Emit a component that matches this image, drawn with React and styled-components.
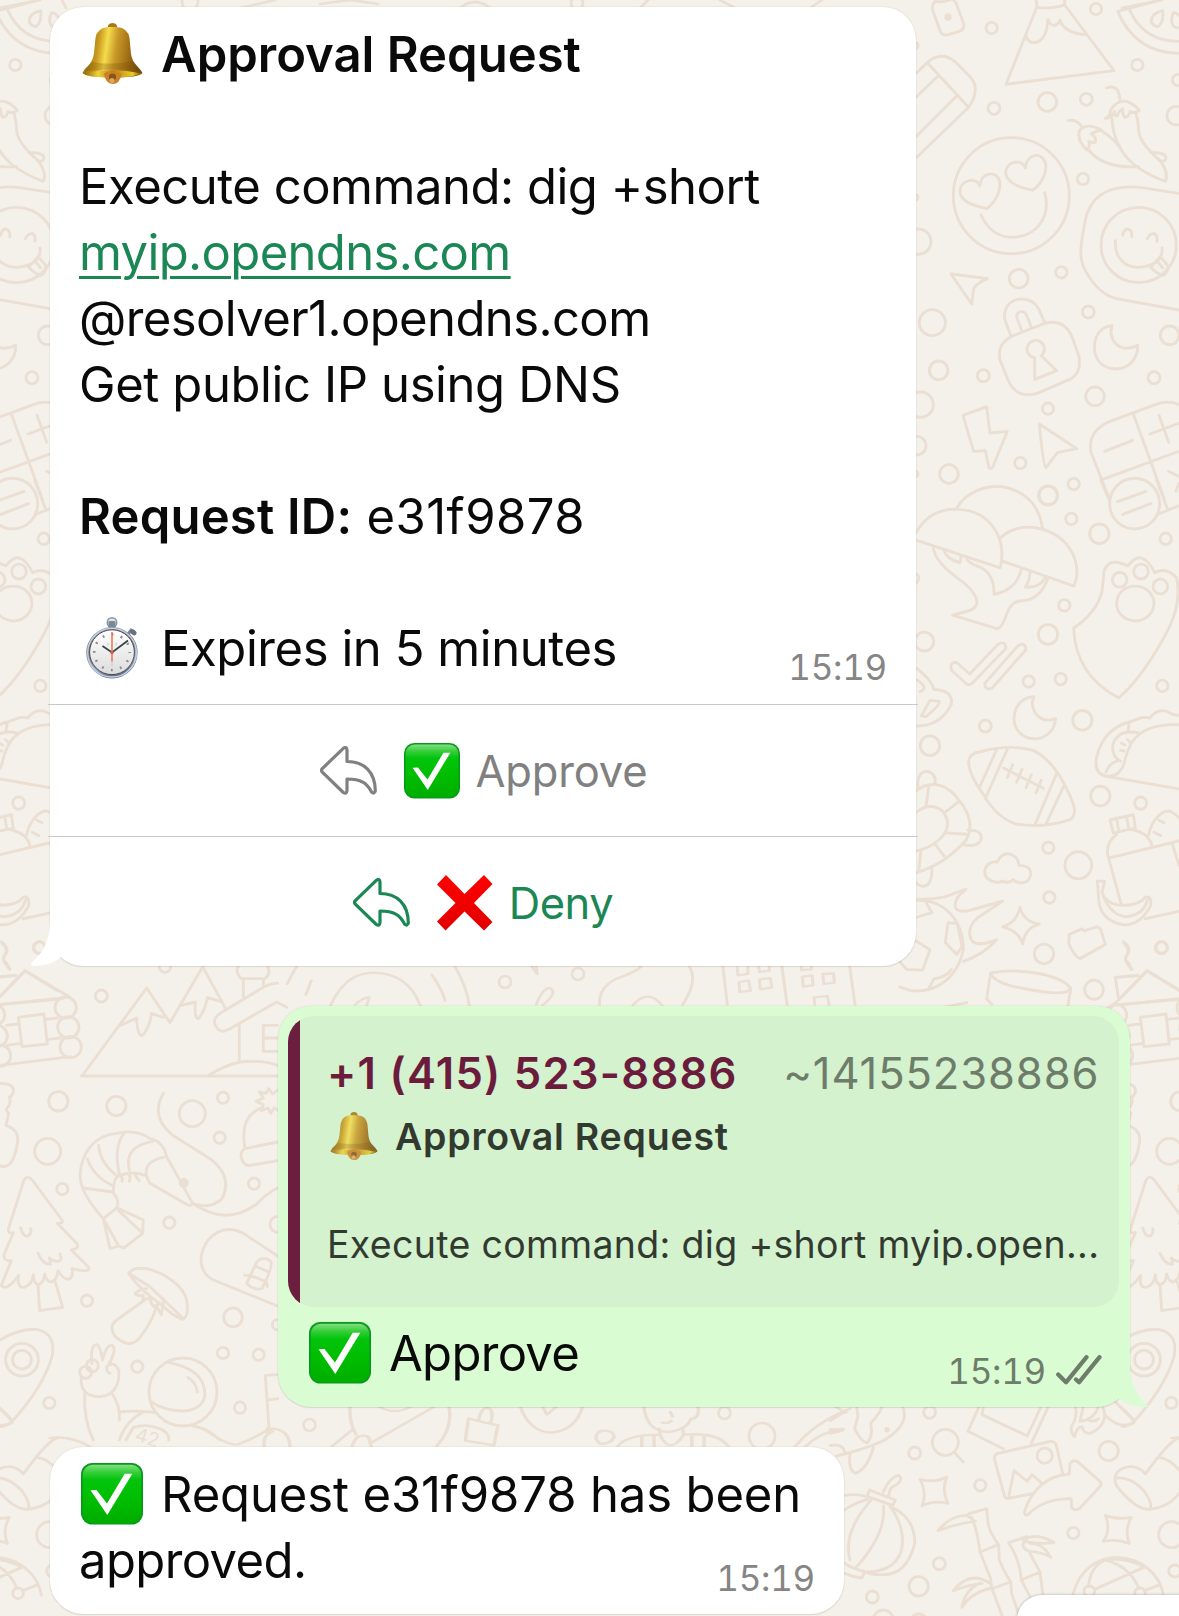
import React from 'react';
import styled, { createGlobalStyle } from 'styled-components';

const GlobalStyle = createGlobalStyle`
  * { box-sizing: border-box; }
  body { margin: 0; background: #f4f1ea; }
`;

const Screen = styled.main`
  position: relative;
  width: 1179px;
  height: 1616px;
  overflow: hidden;
  background: #f4f1ea;
  font-family: Inter, "Liberation Sans", sans-serif;
  color: #0a0a0a;
`;

const Wallpaper = styled.svg`
  position: absolute;
  inset: 0;
  width: 1179px;
  height: 1616px;
`;

const Thread = styled.div`
  position: relative;
  display: flex;
  flex-direction: column;
  align-items: flex-start;
  padding-top: 7px;
`;

const Bubble = styled.section`
  position: relative;
  width: ${(p) => p.$w}px;
  height: ${(p) => p.$h}px;
  flex: none;
  margin-top: ${(p) => p.$mt || 0}px;
  margin-left: ${(p) => p.$ml}px;
  padding: ${(p) => p.$pad};
  border-radius: 33px;
  background: ${(p) => (p.$own ? '#dafcd3' : '#ffffff')};
  box-shadow: 0 0 2px rgba(60, 40, 20, 0.14), 0 1px 1px rgba(60, 40, 20, 0.1);
`;

const Tail = styled.svg`
  position: absolute;
  bottom: -1px;
  ${(p) => (p.$own ? 'right: -19px;' : 'left: -20px;')}
  width: 40px;
  height: 44px;
  fill: ${(p) => (p.$own ? '#dafcd3' : '#ffffff')};
  overflow: visible;
`;

const Body = styled.div`
  padding: 0 29px 0 29px;
`;

const Line = styled.div`
  display: flex;
  height: 66px;
  font-size: 49px;
  line-height: 66px;
  white-space: pre;
`;

const Words = styled.span`
  font-weight: ${(p) => (p.$bold ? 600 : 400)};
  letter-spacing: ${(p) => p.$ls || 0}px;
`;

const Link = styled.a`
  color: #1b8755;
  text-decoration: underline;
  text-decoration-thickness: 3px;
  text-underline-offset: 6px;
`;

const Slot = styled.span`
  display: flex;
  flex: none;
  width: ${(p) => p.$w}px;
  padding-left: ${(p) => p.$x || 0}px;
  padding-top: ${(p) => p.$y || 0}px;
`;

const Split = styled.div`
  display: flex;
  justify-content: space-between;
  align-items: flex-start;
  height: ${(p) => p.$h || 66}px;
`;

const Stamp = styled.time`
  display: flex;
  gap: 10px;
  margin-top: ${(p) => p.$mt}px;
  height: 42px;
  line-height: 42px;
  font-size: 35px;
  font-variant-numeric: tabular-nums;
  letter-spacing: -0.3px;
  color: ${(p) => (p.$own ? '#6d7d6a' : '#858585')};
`;

const Action = styled.button`
  display: flex;
  justify-content: center;
  align-items: center;
  width: 870px;
  height: 132px;
  margin: 0 0 0 -2px;
  padding: 0 0 0 ${(p) => p.$shift || 0}px;
  border: 0;
  border-top: 1px solid #c9c9c9;
  background: none;
  font: 400 43.5px/60px Inter, "Liberation Sans", sans-serif;
  letter-spacing: ${(p) => p.$ls || 0}px;
  color: ${(p) => p.$color};
`;

const ActionIcon = styled.span`
  display: flex;
  margin-right: ${(p) => p.$gap}px;
`;

const Quote = styled.blockquote`
  display: flex;
  height: 291px;
  margin: 0;
  border-radius: 26px;
  overflow: hidden;
  background: #d5f2cf;
`;

const QuoteBar = styled.div`
  width: 12px;
  flex: none;
  background: #6b1e3e;
`;

const QuoteBody = styled.div`
  flex: 1;
  padding: 29px 20px 0 27px;
  color: #323a30;
`;

const QuoteHead = styled.div`
  display: flex;
  justify-content: space-between;
  height: 65px;
  line-height: 57px;
  font-size: 43.5px;
  white-space: pre;
`;

const Sender = styled.span`
  font-weight: 600;
  color: #6b1c3c;
  letter-spacing: 1.27px;
`;

const Handle = styled.span`
  color: #6d7d6a;
  letter-spacing: 0.9px;
`;

const QuoteLine = styled.div`
  display: flex;
  height: 54px;
  line-height: 54px;
  font-size: 37.5px;
  font-weight: ${(p) => (p.$bold ? 600 : 400)};
  letter-spacing: ${(p) => p.$ls || 0}px;
  white-space: pre;
`;

const OwnFoot = styled.div`
  display: flex;
  justify-content: space-between;
  align-items: flex-start;
  padding: 14px 17px 0 21px;
`;

const Corner = styled.div`
  position: absolute;
  left: 1017px;
  top: 1595px;
  width: 240px;
  height: 80px;
  border-radius: 25px;
  background: #fff;
  box-shadow: 0 0 3px rgba(0, 0, 0, 0.3);
`;

const Bell = ({ size, id, faded }) => (
  <svg width={size} height={size} viewBox="0 0 61 61" opacity={faded ? 0.85 : 1}>
    <defs>
      <linearGradient id={id} x1="0" x2="1" y1="0" y2="0.12">
        <stop offset="0.05" stopColor="#8a5c0c" />
        <stop offset="0.3" stopColor="#c99a1c" />
        <stop offset="0.44" stopColor="#f5dc4e" />
        <stop offset="0.6" stopColor="#c99a28" />
        <stop offset="0.82" stopColor="#a06c14" />
        <stop offset="1" stopColor="#77500c" />
      </linearGradient>
      <linearGradient id={`${id}m`} x1="0" x2="1">
        <stop offset="0" stopColor="#8a6008" />
        <stop offset="0.25" stopColor="#f0d23c" />
        <stop offset="0.5" stopColor="#c47a1c" />
        <stop offset="0.85" stopColor="#e6cf22" />
        <stop offset="1" stopColor="#7a5208" />
      </linearGradient>
    </defs>
    <path d="M26 6 Q25 0 30.500 0 Q36 0 35 6Z" fill="#a87814" />
    <path d="M.5 50 Q2 46 6 43 Q11 38 12 30 L13.500 15 Q15 5 26 4 L35 4 Q46 5 47.500 15 L49 31 Q50 38 55 43 Q59 47 60.500 50 Q57 54.500 30.500 54.500 Q4 54.500 .5 50Z" fill={`url(#${id})`} />
    <path d="M10 39 Q30 43 51 38 Q57 45 58 48 Q30 45 3 48 Q6 42 10 39Z" fill="#6f4808" opacity=".25" />
    <path d="M1.500 50.500 Q30 44 59.500 50.500 Q48 55 30.500 54.500 Q10 54.500 1.500 50.500Z" fill={`url(#${id}m)`} />
    <path d="M22 51 Q23 48.500 30 48.500 Q38 48.500 39.500 51 Q38 61 30.500 61 Q23.500 60.500 22 51Z" fill="#c98224" />
    <circle cx="30.500" cy="54" r="3.600" fill="#8a5418" />
    <circle cx="30" cy="57.500" r="2.500" fill="#d9a766" />
  </svg>
);

const Stopwatch = () => (
  <svg width="54" height="62" viewBox="0 0 54 62">
    <defs>
      <linearGradient id="rim" x1="0" y1="0" x2="0.3" y2="1">
        <stop offset="0" stopColor="#a3b6cc" />
        <stop offset="0.45" stopColor="#6b6e75" />
        <stop offset="0.8" stopColor="#93a9c5" />
        <stop offset="1" stopColor="#66758c" />
      </linearGradient>
      <linearGradient id="dial" x1="0" y1="0" x2="0" y2="1">
        <stop offset="0" stopColor="#fff" />
        <stop offset="1" stopColor="#dcdcde" />
      </linearGradient>
    </defs>
    <circle cx="26" cy="5.500" r="4.700" fill="#dfe4ea" stroke="#8b96a4" strokeWidth="1.600" />
    <rect x="22.500" y="4" width="7" height="7" rx="1.500" fill="#7b8794" />
    <path d="M42 17 L46 12" stroke="#7b8694" strokeWidth="3" />
    <ellipse cx="47.500" cy="15" rx="3.400" ry="2.500" fill="#65717f" transform="rotate(40 47 15)" />
    <circle cx="26" cy="35.700" r="25.700" fill="url(#rim)" />
    <circle cx="26" cy="35.700" r="24.300" fill="none" stroke="#c3d2e5" strokeWidth="1.400" />
    <circle cx="26" cy="35.200" r="22.400" fill="url(#dial)" stroke="#55474b" strokeWidth="1" />
    <circle cx="26" cy="35.200" r="17.800" fill="none" stroke="#8a8a8a" strokeWidth="2.600" strokeDasharray="1.800 7.520" strokeDashoffset=".9" />
    <path d="M26 43 v6 M22 25.500 v3 M30 25.500 v3" stroke="#c8c8c8" strokeWidth="1" />
    <path d="M16.500 29 L26 35.500 L42 23.500" fill="none" stroke="#34454a" strokeWidth="1.800" />
    <path d="M26 15 V44.500" stroke="#ee7a58" strokeWidth="1.600" />
    <circle cx="26" cy="35.500" r="1.700" fill="#d8603e" />
  </svg>
);

const CheckBox = ({ size, id }) => (
  <svg width={size} height={size} viewBox="0 0 62 62">
    <defs>
      <linearGradient id={id} x1="0" y1="0" x2="0" y2="1">
        <stop offset="0" stopColor="#84dd84" />
        <stop offset="0.13" stopColor="#35ce38" />
        <stop offset="0.26" stopColor="#02c40c" />
        <stop offset="0.6" stopColor="#00bd00" />
        <stop offset="1" stopColor="#00ad00" />
      </linearGradient>
    </defs>
    <rect width="62" height="61.500" rx="11.500" fill="#07991a" />
    <rect x="1.700" y="1.700" width="58.600" height="58.500" rx="10" fill={`url(#${id})`} />
    <path d="M9.500 27.300 L15.500 27 L26 40.500 L43.700 10.700 L51.300 10.700 L26.300 52Z" fill="#fff" />
  </svg>
);

const Cross = () => (
  <svg width="56" height="56" viewBox="0 0 56 56">
    <defs>
      <linearGradient id="cross" x1="0" y1="0" x2="0" y2="1">
        <stop offset="0" stopColor="#ff0000" />
        <stop offset="1" stopColor="#e20000" />
      </linearGradient>
    </defs>
    <path d="M0 9.500 L9 0 L27.500 19 L47 0 L55.500 9 L37 28 L55.500 47 L47 55.500 L27.500 36.500 L8.500 55.500 L0 46.500 L18.500 28Z" fill="url(#cross)" />
  </svg>
);

const Reply = () => (
  <svg width="57" height="49" viewBox="0 0 57 49" fill="none" stroke="currentColor" strokeWidth="3.200" strokeLinejoin="round">
    <path d="M2.300 22.600 L23.300 2.300 Q26.800 .2 27 4 V15.500 C44 15.500 55.300 26 55.300 45 Q54.500 48.500 51.500 46 C47 37 41 33 27 33 V44.500 Q26.500 48.500 23.300 46.500 L2.300 26.200 Q.8 24.400 2.300 22.600Z" />
  </svg>
);

const Ticks = () => (
  <svg width="46" height="30" viewBox="0 0 46 30" fill="none" stroke="currentColor" strokeWidth="4.200" strokeLinecap="round" strokeLinejoin="round">
    <path d="M2.200 19.500 L10 27.300 L30.500 2.200 M20 24.500 L23 27.300 L43.500 2.200" />
  </svg>
);

const doodles = [
  {
    at: 'translate(900 0) scale(.33333)',
    circles: [[275, 84, 17], [588, 27, 17], [712, 195, 17], [442, 306, 28], [559, 298, 18], [282, 325, 18], [334, 587, 174], [549, 537, 17], [55, 725, 38], [356, 836, 28], [484, 817, 17], [97, 968, 39], [565, 936, 18], [116, 1111, 28], [250, 1127, 18], [762, 1133, 18], [585, 1189, 28], [809, 1006, 28], [62, 1214, 38], [444, 1226, 17], [50, 1337, 28], [361, 1389, 17], [147, 1422, 28], [521, 1452, 17], [445, 1486, 28], [716, 735, 113], [829, 347, 28], [834, 240, 17], [46, 137, 8], [46, 592, 8], [46, 1422, 8]],
    dots: [[144, 51, 11]],
    paths: [
      'M106 0 L100 12 Q94 20 100 36 L120 92 Q126 108 144 104 L178 94 Q196 88 190 68 L168 8 L160 0 M104 4 Q128 8 150 0',
      'M410 22 L318 253 L642 212 L494 15 M408 0 L412 22 Q460 28 494 14 L494 0 M378 108 Q384 128 402 128 Q430 126 440 88 L444 58 Q450 76 462 76 Q476 74 480 60 Q492 100 560 104',
      'M780 0 L653 34 Q706 158 837 160 M688 28 Q730 124 837 124 M788 32 Q752 40 754 66 Q760 78 774 80 Q792 66 788 32Z M820 38 Q806 74 830 84 Q850 80 846 62 Q836 38 820 38',
      'M48 220 L82 188 Q122 152 164 184 L210 230 Q244 266 206 322 L48 474 M82 188 L206 322 M114 228 L48 292 M170 288 L48 410',
      'M261 626 C206 616 180 596 180 574 C180 538 232 530 240 558 C242 524 272 514 290 528 C312 552 294 600 261 626Z',
      'M399 570 C344 562 317 540 317 516 C320 482 368 476 376 504 C380 468 410 458 428 474 C450 500 430 548 399 570Z',
      'M243 645 C266 694 300 712 338 712 C410 710 454 650 434 578',
      'M620 264 Q656 250 660 300 M616 355 Q630 352 632 330 Q650 300 680 304 Q704 312 718 332 Q700 342 690 334 Q688 350 674 352 Q666 340 668 326 Q654 334 652 348 Q640 348 644 334 Q634 356 616 355 M636 356 Q640 440 700 492 Q740 524 796 544 Q808 520 780 482 Q716 426 716 390 Q714 360 708 340 M752 458 Q800 456 798 476 Q790 490 776 480',
      'M505 362 Q530 356 546 382 M560 450 Q530 420 538 392 Q560 366 604 390 Q580 396 574 402 Q590 412 586 426 Q570 428 566 424 Q572 440 560 450 M604 392 Q640 416 660 442 M566 450 Q610 506 716 500',
      'M837 580 L720 562 Q580 550 556 660 C540 740 536 778 556 812 Q596 884 650 896 L837 930 M668 706 Q672 686 684 687 Q698 692 695 710 M742 716 Q750 700 762 700 Q774 706 771 724 M646 722 C644 780 680 802 714 802 C760 800 790 780 786 744 M752 802 L780 770 L802 794 Q808 812 790 826 Q776 826 752 802 M772 784 L788 804',
      'M153 822 L262 836 Q230 850 221 866 L215 912Z',
      'M332 1006 L314 958 Q310 910 352 898 Q396 892 416 926 L434 968 M366 994 L350 952 Q350 936 364 934 Q376 936 380 946 L394 982 M332 1010 L434 970 Q490 956 514 1006 L536 1066 Q548 1124 500 1142 L412 1180 Q350 1198 324 1140 L300 1080 Q290 1034 332 1010Z M404 1073 L404 1138 L470 1112 L424 1067 A26 26 0 1 0 404 1073',
      'M636 977 C600 980 583 1010 583 1044 C584 1086 616 1107 648 1107 C684 1106 714 1080 713 1036 Q670 1056 646 1030 Q626 1004 636 977Z',
      'M189 1246 L260 1220 L270 1299 L322 1294 L278 1402 Q270 1410 266 1400 L256 1352 L221 1354Z',
      'M418 1272 L530 1346 L472 1358 L438 1403 Q430 1400 418 1272Z',
      'M837 1214 Q800 1198 760 1216 L620 1268 Q560 1300 574 1360 L628 1496 M700 1242 L794 1500 M608 1438 L837 1354 M614 1354 L698 1321 M750 1302 L837 1270 M777 1246 L806 1327 M806 1414 L837 1430 M837 1450 L828 1474',
    ],
  },
  {
    at: 'translate(900 480) scale(.33333 .33801)',
    circles: [[444, 46, 28], [514, 115, 17], [598, 159, 29], [797, 174, 17], [704, 70, 75], [493, 371, 17], [444, 457, 29], [73, 478, 28], [386, 596, 17], [482, 589, 17], [787, 609, 17], [256, 728, 18], [547, 711, 29], [90, 786, 29], [601, 935, 29], [722, 956, 18], [445, 1088, 17], [535, 1140, 40], [448, 1235, 17], [432, 1402, 29], [785, 1383, 17], [582, 1508, 28], [659, 295, 22], [723, 271, 22], [781, 315, 22], [40, 291, 16]],
    paths: [
      'M170 84 C200 30 270 14 310 20 C390 36 420 90 427 140 M48 156 C80 100 130 84 176 87 C270 92 322 170 301 260 L48 178 M300 172 C340 138 380 136 410 142 C510 160 550 250 522 314 L308 240',
      'M100 200 Q104 240 170 288 C230 330 250 370 210 386 L158 400 L290 440 Q306 440 320 396 Q334 360 360 358 Q420 358 444 290 M130 204 Q140 236 180 244 L184 224 M200 232 Q204 246 236 256 Q284 276 282 338 Q350 326 364 264 M390 274 Q388 300 376 317 Q420 320 436 288',
      'M653 64 L738 34 M668 102 L752 70 M602 0 L628 60 M770 0 L804 90 M772 102 L837 76',
      'M612 270 Q626 226 684 254 Q726 198 764 274 Q800 256 830 290 C844 360 820 420 784 480 Q720 590 656 645 C570 600 524 530 521 438 Q590 392 606 330 Q610 300 612 270Z M650 366 C650 330 680 314 706 314 C740 314 762 340 762 366 C760 400 730 417 706 417 C670 414 650 392 650 366Z',
      'M154 562 Q148 538 170 540 L209 574 L294 486 Q316 474 318 498 L216 602 Q206 610 198 602Z M254 602 L354 490 Q376 478 378 502 L276 616 Q256 624 254 602Z',
      'M48 556 Q94 590 102 620 Q160 622 154 664 Q120 730 48 728 M64 698 L90 652 L118 655 Q122 664 78 700Z M48 590 Q90 614 60 626',
      'M402 641 C366 642 342 670 342 708 C344 744 372 766 406 766 C440 764 464 740 467 706 Q430 720 406 690 Q390 664 402 641Z',
      'M206 834 Q208 808 240 804 Q330 780 400 800 Q460 830 500 914 C530 970 530 996 506 1006 Q430 1030 350 1018 Q290 1000 250 930 Q206 870 206 834Z M290 798 L238 910 M322 796 L256 942 M470 868 L405 1020 M490 908 L438 1018 M311 852 L430 912 M338 842 L322 880 M366 856 L350 894 M394 872 L378 910 M424 888 L408 926',
      'M837 696 Q820 696 800 684 Q770 676 750 704 Q730 700 716 706 L688 716 Q610 736 590 820 Q580 868 620 877 L837 914 M837 724 Q740 720 700 770 Q680 800 672 840 Q656 880 620 876 M688 716 L684 744 M716 748 Q650 736 638 786 Q636 820 662 832 M618 864 Q630 836 650 832 M664 778 l10 6 M682 768 l8 8 M662 800 l10 2',
      'M48 920 C100 880 150 910 176 946 Q230 1010 198 1066 Q130 1140 48 1162 M54 912 Q50 860 84 862 Q112 872 104 902 M48 984 Q90 950 128 980 Q160 1020 122 1060 Q90 1090 48 1098 M86 908 L78 966 M178 950 L134 984 M138 1044 L198 1048 M104 1076 L132 1112 M62 1102 L56 1160 M204 1036 Q244 1034 244 1060 Q236 1090 186 1078 M96 1150 Q96 1200 70 1202 Q52 1200 48 1190',
      'M290 1190 Q252 1184 254 1156 Q262 1126 292 1130 Q304 1104 326 1106 Q356 1112 356 1140 Q394 1140 392 1168 Q386 1194 360 1192 Q346 1190 340 1182 Q326 1196 306 1186 Q296 1192 290 1190Z',
      'M630 1006 L700 990 L706 1030 L640 1044Z M650 1000 L656 1040 M680 996 L686 1030 M650 1048 Q616 1074 624 1112 L664 1256 M696 1034 Q750 1046 756 1084 M628 1118 L837 1068 M746 1050 C756 1000 790 976 810 980 Q830 990 837 1000 M776 1006 L792 1014 M762 1042 L782 1052 M816 1074 L837 1140 M735 1298 L837 1276',
      'M592 1186 L614 1188 L606 1220 Q620 1260 676 1258 Q720 1256 736 1234 Q756 1230 752 1260 Q720 1318 670 1316 Q600 1304 596 1240Z M606 1220 Q630 1290 680 1292 Q730 1286 742 1244',
      'M48 1240 Q130 1240 160 1224 L198 1210 Q160 1240 166 1264 Q176 1284 220 1270 L308 1246 L232 1296 Q196 1330 216 1364 Q236 1382 290 1360 Q250 1404 190 1424 M48 1244 C130 1240 190 1300 190 1390 C170 1480 100 1520 30 1510 L0 1500 M76 1246 L96 1280 L48 1294 M144 1310 L172 1312 L186 1380 L170 1404 L136 1368Z M48 1364 L90 1390 L68 1450 L20 1448 L0 1426 M84 1508 L102 1476 Q140 1470 154 1448',
      'M360 1264 Q370 1306 418 1314 Q376 1324 368 1372 Q356 1334 308 1322 Q350 1310 360 1264Z',
      'M508 1344 L546 1328 L552 1334 L590 1322 Q598 1322 602 1330 L616 1374 L540 1416 Q526 1414 506 1372Z',
      'M272 1458 C380 1440 490 1470 512 1504 Q500 1530 380 1506 Q280 1490 272 1458 L260 1535 L275 1550 M512 1504 L502 1568',
      'M670 1366 Q694 1384 684 1400 Q670 1416 682 1430 L694 1448 M634 1560 L740 1452 L837 1510 M656 1538 L646 1472 L714 1466 M640 1554 L837 1536 M100 1566 L200 1546',
    ],
  },
  {
    at: 'translate(0 940) scale(.33333)',
    circles: [[197, 203, 32], [205, 262, 32], [212, 321, 32], [-18, 225, 32], [-10, 288, 32], [0, 347, 32], [118, 23, 18], [304, 168, 18], [495, 80, 17], [175, 484, 29], [349, 498, 29], [577, 521, 39], [669, 473, 17], [659, 593, 17], [143, 634, 39], [187, 747, 17], [762, 731, 17], [508, 848, 17], [261, 1082, 17], [699, 1132, 28], [669, 1239, 17], [776, 1244, 17], [412, 1280, 17], [148, 1389, 17], [720, 1403, 17], [834, 853, 24], [832, 1154, 15], [66, 1259, 28], [66, 1259, 49], [549, 1356, 102], [277, 1277, 18], [257, 1297, 18]],
    dots: [[551, 729, 15]],
    paths: [
      'M0 110 L46 106 M0 170 L76 92 L210 172 M0 194 L190 174 M55 232 L132 222 L142 312 L66 320Z M20 256 L55 252 M138 238 L172 234 M22 316 L62 310 M146 298 L180 294 M0 376 L212 350',
      'M6 10 Q24 28 16 44 Q4 60 20 70 L30 88',
      'M246 408 L440 144 L510 248 L608 80 L678 208 M244 408 L833 408 M362 256 L410 234 Q412 290 428 286 Q450 260 454 220 L490 232 M544 196 L586 186 Q582 236 596 236 Q616 210 622 172 L660 184',
      'M730 118 L730 170 M790 118 L790 136 M724 116 Q700 90 720 74 L800 74 Q816 100 794 116Z M833 130 Q810 130 790 142 L660 220 Q630 240 654 268 Q670 280 690 266 L830 186 L860 202 M718 252 L718 360 M833 256 L790 256 L790 334 L833 334 M790 294 L833 294 M626 406 Q700 360 760 364 Q800 364 833 376',
      'M0 430 Q44 430 40 456 Q34 474 28 470 Q34 490 24 500 Q14 510 26 520 L18 556 Q60 570 52 610 Q40 690 0 678',
      'M833 510 L822 504 L812 520 L804 504 L784 512 L790 494 L768 484 L790 474 L778 456 L798 460 L806 446 L818 462 L833 450 M734 620 Q720 530 780 506 M833 606 L734 626 Q720 634 724 654 Q732 680 752 676 L833 662',
      'M490 460 Q450 530 516 584 L630 656 Q700 710 666 776 Q630 810 578 790 Q680 860 770 792 Q800 760 833 744',
      'M310 836 C250 770 240 730 240 706 C244 640 280 586 350 580 Q410 566 450 596 Q490 604 500 650 L578 790 Q572 800 562 794 L450 730 Q430 700 444 676 Q460 656 500 650 M310 836 L350 804 Q360 780 340 760 Q340 720 352 710 Q390 690 436 706 M250 744 L338 756 M262 656 Q280 710 340 738 M296 616 Q300 670 352 708 M372 580 Q340 620 358 700 M458 604 Q370 620 388 690 M310 836 L330 926 L356 918 L312 840 M356 806 L430 840 L428 880 L372 924 L356 918 M356 812 L424 876 M356 704 Q370 710 366 724 M384 700 Q394 708 388 724 M404 700 Q410 716 418 722',
      'M72 720 Q84 702 98 722 L186 840 Q192 850 172 850 L232 912 Q238 926 214 930 L266 982 Q272 1000 216 986 Q222 1006 208 1018 Q190 1020 174 992 Q172 1020 154 1026 Q140 1026 134 1002 Q132 1030 114 1034 Q100 1030 100 1004 Q96 1036 72 1042 Q50 1044 56 1006 Q20 1056 4 1036 L34 962 Q10 964 12 944 L40 878 Q22 884 26 864Z M114 1034 L119 1112 L188 1102 L166 1026 M62 864 Q70 892 84 888 Q96 880 92 866 M114 940 Q130 976 152 972 L148 954 Q170 972 184 958 L180 942',
      'M386 1000 Q400 980 440 986 C500 1000 550 1040 560 1080 Q568 1130 548 1138 Q520 1130 486 1096 Q420 1050 386 1000Z M386 1000 L450 1040 L548 1134 M434 1080 L350 1140 Q324 1160 346 1190 Q390 1230 420 1192 Q460 1140 470 1096 M440 1046 Q410 1050 406 1062 Q420 1070 430 1066 L428 1076 Q440 1080 452 1072 Q450 1090 462 1100 Q476 1090 470 1100 L484 1124 Q490 1100 490 1076',
      'M833 948 L730 880 Q670 850 624 900 C590 950 600 1000 640 1020 L833 1098 M740 1030 L770 966 Q790 946 812 964 Q820 980 786 1046 Q760 1052 740 1030 M766 978 L802 994 M752 1006 L790 1022 M734 1006 L754 1006 M798 1020 L802 1040',
      'M0 1200 Q60 1164 110 1168 Q170 1180 156 1250 Q130 1340 40 1440 Q20 1460 0 1460 M0 1404 L36 1440',
      'M276 1270 Q270 1216 290 1214 Q300 1216 308 1260 Q320 1210 338 1216 Q350 1230 328 1270 M244 1312 C240 1350 260 1370 300 1370 C350 1366 360 1320 356 1290 Q340 1260 320 1280 Q318 1296 330 1300 M254 1356 Q250 1440 280 1500 M336 1360 Q362 1400 358 1440',
      'M508 1268 Q620 1290 614 1370 C600 1430 500 1420 452 1384 M564 1312 Q590 1330 592 1356 M360 1416 Q400 1410 468 1418 M430 1416 Q380 1440 358 1500 M378 1500 L400 1462 Q440 1450 480 1466 Q510 1480 506 1500 M580 1458 Q620 1464 660 1500 M833 1304 L796 1306 L808 1480 M804 1380 L833 1376',
    ],
  },
  {
    at: 'translate(830 1380) scale(.33333)',
    circles: [[299, 97, 18], [254, 219, 18], [346, 187, 39], [451, 316, 17], [328, 551, 18], [266, 619, 29], [127, 651, 18], [160, 720, 30], [730, 459, 17], [836, 213, 29], [1025, 464, 39], [1034, 573, 18], [644, 227, 23], [778, 634, 16], [930, 640, 16], [266, 728, 26]],
    dots: [[171, 149, 8]],
    paths: [
      'M374 218 L400 246 M218 80 Q240 130 170 176 Q130 200 20 228 M0 122 L48 92 M0 148 L40 150 L0 160 M80 80 L84 108 L74 146 Q96 190 112 188 Q130 170 122 130 Q150 100 156 80 M0 196 Q40 190 44 216 M60 220 Q54 270 76 280 Q110 270 130 204',
      'M446 82 L414 154 L520 206 M460 82 L456 104 L592 168 L632 82 M654 82 L604 190 M604 342 L540 354 Q528 358 524 350 L494 240 Q490 226 504 220 L662 184 Q678 184 680 200 L698 280 M536 350 L552 272 L592 304 L606 284 L636 310',
      'M596 402 Q582 412 584 392 Q620 290 718 282 L720 250 Q730 238 742 244 L810 304 Q818 314 808 322 L748 386 Q732 394 724 380 L724 356 Q640 356 596 402Z',
      'M736 80 Q744 112 724 140 Q722 160 734 170 Q740 140 756 140 Q760 160 780 160 Q826 140 824 100 L818 80 M760 80 L750 124 Q790 120 804 84 M770 118 Q790 130 806 116 M828 108 Q870 150 912 128 M856 66 L912 122',
      'M270 298 Q310 310 350 292 Q334 330 354 370 Q310 360 276 378 Q292 340 270 298Z M826 406 Q860 420 904 412 Q882 450 898 490 Q860 476 820 484 Q844 446 826 406Z',
      'M112 350 L118 330 L196 360 L188 376Z M160 336 Q180 290 206 286 Q222 300 196 316 Q180 320 176 346 M44 346 Q80 340 112 350 M180 380 C230 400 256 440 254 490 Q230 590 150 584 Q120 584 100 572 M122 362 C70 420 44 480 60 540 M160 378 Q170 460 80 560 M180 380 C220 430 230 500 200 540 Q170 576 110 576 M44 550 L60 560 L104 576 L96 594 Q70 592 44 580 M44 390 Q70 370 112 358',
      'M416 402 L470 386 L474 430 Q480 460 506 494 L508 540 Q520 570 542 606 L545 640 L565 700 M424 412 Q440 440 450 516 L480 590 L486 626 L516 706 M450 516 L506 494 M486 626 L542 606 M324 452 Q360 406 410 406 L436 424 Q380 430 324 452Z M370 632 Q420 570 480 610 M370 632 Q410 616 456 610 M484 624 Q420 640 396 682 Q404 630 450 610 M590 470 L536 488 Q570 540 574 600 L600 650 M600 520 L630 576 L638 640 M574 600 L630 576 M580 480 Q620 456 672 488 Q630 494 584 484 Q570 500 596 514 Q640 516 662 532 Q640 490 600 490',
      'M1047 174 Q1020 180 946 282 Q920 250 880 264 C846 280 850 310 870 330 Q920 390 960 388 Q1020 380 1047 340 M862 294 Q900 290 940 330 Q970 370 960 388 M986 232 Q1020 236 1047 270',
      'M728 645 C750 560 810 532 864 532 C930 534 990 580 1000 645 M794 628 L946 560 M944 632 L990 614 M776 618 Q780 560 826 540 Q900 560 926 624 M826 540 Q880 530 940 560',
    ],
  },
  {
    at: 'translate(230 960) scale(.44643 .33333)',
    circles: [],
    paths: [
      'M128 72 Q140 40 150 18 M170 104 L182 62 M225 136 C250 66 280 38 324 38 C370 40 406 66 426 136 M452 44 Q476 90 482 122 M504 20 Q530 80 536 136 M280 134 Q298 112 312 112 L306 136 M676 20 L688 42 L686 18 M686 134 Q700 84 716 84 Q736 96 700 136 M922 18 Q910 36 866 56 Q824 84 828 136 M1028 18 Q1050 60 1014 134 M902 136 Q936 84 968 136',
      'M1104 18 L1114 134 M1236 18 L1248 134 M1388 18 L1400 134 M1136 22 l2 24 l22 -4 v-22 M1184 20 l2 16 l22 -4 v-14 M1140 66 L1162 62 L1166 92 L1142 96Z M1186 58 L1210 54 L1214 82 L1188 88Z M1282 50 L1304 46 L1306 76 L1284 80Z M1328 42 L1352 40 L1354 68 L1330 72Z M1310 134 L1308 112 L1338 108 L1342 134 M1280 20 v10 l22 -2 v-10',
    ],
  },
  {
    at: 'translate(50 1402) scale(.5102 .33333)',
    circles: [],
    paths: [
      'M588 15 Q586 60 600 98 M782 15 Q790 80 758 132 M646 15 Q676 40 706 15 M752 15 L630 122 M592 84 L552 134 M592 134 Q600 90 624 104 L630 134 M820 50 L878 70 L870 130 L814 116Z M840 54 Q846 10 862 20 Q870 30 864 62 M922 15 Q940 90 984 92 Q1030 84 1044 15 M966 15 L974 38 L992 15',
      'M1164 15 Q1170 90 1214 90 Q1250 80 1256 50 Q1274 50 1270 15 M1194 80 L1196 100 Q1216 160 1242 98 L1240 80 M1112 134 Q1130 98 1194 98 M1242 98 Q1310 90 1330 134 M1160 104 V134 M1184 100 V134 M1258 100 V134 M1282 104 V134 M1070 110 Q1070 86 1086 86 Q1104 86 1106 104 Q1100 126 1078 126Z M1200 62 Q1212 66 1218 56 M1216 30 L1220 44 M1460 134 Q1500 60 1568 20 M1480 134 Q1510 90 1554 80 M1540 15 L1560 32',
      'M426 90 L426 80 M300 78 Q350 136 370 126 Q400 110 430 80 Q470 80 470 134 M420 134 Q416 100 436 88 M0 108 Q40 100 78 134',
    ],
  },
  {
    at: '',
    circles: [[505, 982, 6], [578, 974, 6], [309.500, 1425, 6], [724.500, 1413, 6], [762, 1436, 13], [190, 2, 8], [577, 3, 6]],
    paths: ['M0 8 L40 0 M62 0 L66 8 M240 8 L275 0 M320 4 L350 0 L378 4 M460 8 Q475 -4 490 8 M640 8 L648 0 M720 0 L735 8 M810 8 L822 0'],
  },
];

const Pattern = () => (
  <Wallpaper viewBox="0 0 1179 1616" aria-hidden="true">
    <defs>
      <g id="tile" fill="none" stroke="#eadfd2" strokeLinecap="round" strokeLinejoin="round">
        {doodles.map((g, i) => (
          <g key={i} transform={g.at || undefined} strokeWidth={!g.at ? 2.7 : i > 3 ? 6.8 : 8.6}>
            {g.circles.map(([x, y, r], k) => <circle key={k} cx={x} cy={y} r={r} />)}
            {(g.dots || []).map(([x, y, r], k) => <circle key={k} cx={x} cy={y} r={r} fill="#eadfd2" stroke="none" />)}
            {g.paths.map((d, k) => <path key={k} d={d} />)}
          </g>
        ))}
        <text x="0" y="0" transform="translate(134 1440) rotate(18)" fontSize="19" fontFamily="Inter, sans-serif" fill="#eadfd2" stroke="none">42</text>
      </g>
    </defs>
    <use href="#tile" />
    <use href="#tile" x="-1122" />
    <use href="#tile" x="1122" />
  </Wallpaper>
);

export default function App() {
  return (
    <Screen>
      <GlobalStyle />
      <Pattern />
      <Thread>
        <Bubble $w={866} $h={959} $ml={50} $pad="15px 0 0">
          <Tail viewBox="0 0 40 44">
            <path d="M20 -8 V-2 C20 12 16 28 2.500 38.500 Q0 41.500 1.500 42.800 Q20 44 31 34 L40 0Z" />
          </Tail>
          <Body>
            <Line>
              <Slot $w={82} $x={3} $y={1}><Bell size={61} id="bellA" /></Slot>
              <Words $bold>Approval Request</Words>
            </Line>
            <Line />
            <Line><Words $ls={-0.48}>Execute command: dig +short</Words></Line>
            <Line><Words $ls={-0.64}><Link>myip.opendns.com</Link></Words></Line>
            <Line><Words $ls={-0.6}>@resolver1.opendns.com</Words></Line>
            <Line><Words $ls={-0.4}>Get public IP using DNS</Words></Line>
            <Line />
            <Line><Words $bold $ls={0.2}>Request ID:</Words><Words $ls={0.45}> e31f9878</Words></Line>
            <Line />
            <Split $h={88}>
              <Line>
                <Slot $w={82} $x={7} $y={1}><Stopwatch /></Slot>
                <Words $ls={-0.44}>Expires in 5 minutes</Words>
              </Line>
              <Stamp $mt={30}>15:19</Stamp>
            </Split>
          </Body>
          <Action $color="#808080" $ls={-0.15} $shift={2}>
            <ActionIcon $gap={27}><Reply /></ActionIcon>
            <ActionIcon $gap={15}><CheckBox size={56} id="checkA" /></ActionIcon>
            Approve
          </Action>
          <Action $color="#1b8755" $ls={-0.4}>
            <ActionIcon $gap={27}><Reply /></ActionIcon>
            <ActionIcon $gap={16}><Cross /></ActionIcon>
            Deny
          </Action>
        </Bubble>

        <Bubble $own $w={852} $h={401} $mt={40} $ml={278} $pad="10px 11px 0 10px">
          <Tail $own viewBox="0 0 40 44">
            <path d="M21 -4 V2 C21 16 26 31 37.500 40.500 Q40 42.500 38 43 Q20 43 9 34 L0 0Z" />
          </Tail>
          <Quote>
            <QuoteBar />
            <QuoteBody>
              <QuoteHead>
                <Sender>+1 (415) 523-8886</Sender>
                <Handle>~14155238886</Handle>
              </QuoteHead>
              <QuoteLine $bold $ls={0.78}>
                <Slot $w={68} $x={3} $y={2}><Bell size={48} id="bellB" faded /></Slot>
                Approval Request
              </QuoteLine>
              <QuoteLine />
              <QuoteLine $ls={0.32}>Execute command: dig +short myip.open...</QuoteLine>
            </QuoteBody>
          </Quote>
          <OwnFoot>
            <Line>
              <Slot $w={80} $y={1}><CheckBox size={62} id="checkB" /></Slot>
              <Words $ls={-0.7}>Approve</Words>
            </Line>
            <Stamp $own $mt={29}>15:19<Slot $w={46} $y={5}><Ticks /></Slot></Stamp>
          </OwnFoot>
        </Bubble>

        <Bubble $w={794} $h={167} $mt={40} $ml={50} $pad="15px 0 0">
          <Body>
            <Line>
              <Slot $w={82} $x={2} $y={1}><CheckBox size={62} id="checkC" /></Slot>
              <Words $ls={-0.14}>Request e31f9878 has been</Words>
            </Line>
            <Split>
              <Line><Words $ls={-0.6}>approved.</Words></Line>
              <Stamp $mt={29}>15:19</Stamp>
            </Split>
          </Body>
        </Bubble>
      </Thread>
      <Corner />
    </Screen>
  );
}
